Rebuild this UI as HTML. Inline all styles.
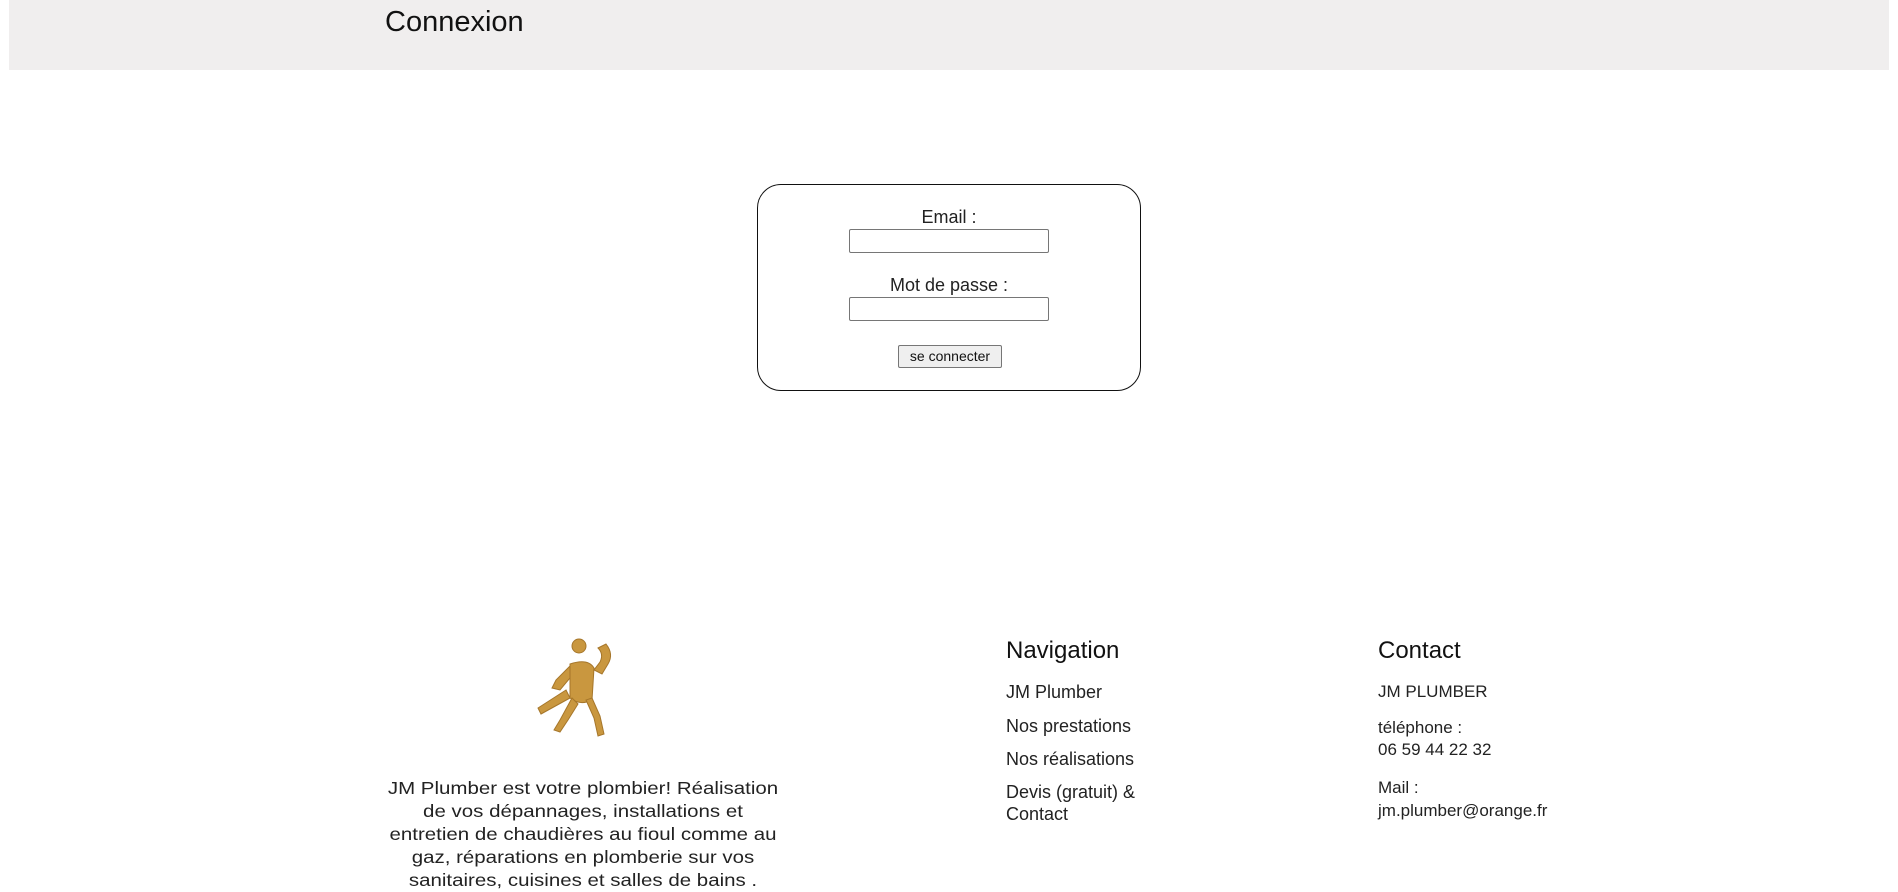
<!DOCTYPE html>
<html><head><meta charset="utf-8"><style>
body{margin:0;width:1898px;height:886px;overflow:hidden;background:#fff;font-family:"Liberation Sans",sans-serif;color:#222;position:relative}
.hdr{position:absolute;left:9px;top:0;width:1880px;height:70px;background:#f0eeee}
.hdr h1{position:absolute;left:376px;top:6px;margin:0;font-weight:normal;font-size:29px;color:#111}
.box{position:absolute;left:757px;top:184px;width:382px;height:205px;border:1.5px solid #111;border-radius:24px}
.lbl{position:absolute;width:100%;text-align:center;font-size:18px;color:#222}
.inp{position:absolute;left:91px;width:198px;height:22px;border:1px solid #767676;border-radius:2px;background:#fff}
.btn{position:absolute;left:140px;top:160px;width:102px;height:21px;border:1px solid #767676;border-radius:2px;background:#efefef;font-size:14px;text-align:center;line-height:21px;color:#111}
.t{position:absolute;font-size:18px;color:#222;white-space:nowrap}
.h{position:absolute;font-size:24px;color:#111}
.p{position:absolute;left:333px;top:777px;width:500px;text-align:center;font-size:17.5px;line-height:23px;color:#222;white-space:nowrap;transform:scaleX(1.17);transform-origin:250px 0}
</style></head><body>
<div class="hdr"><h1>Connexion</h1></div>
<div class="box">
<div class="lbl" style="top:22px">Email :</div>
<div class="inp" style="top:44px"></div>
<div class="lbl" style="top:90px">Mot de passe :</div>
<div class="inp" style="top:112px"></div>
<div class="btn">se connecter</div>
</div>
<svg style="position:absolute;left:530px;top:634px" width="100" height="106" viewBox="0 0 100 106">
<g fill="#c9973f" stroke="#a6762a" stroke-width="1">
<circle cx="49" cy="12" r="7"/>
<path d="M36 56 L8 74 L11 80 L40 64 Z"/>
<path d="M40 30 Q58 24 64 34 L62 66 Q50 72 40 64 Z"/>
<path d="M68 14 L76 10 Q84 20 78 30 L72 40 L64 36 L70 28 Q74 20 68 14Z"/>
<path d="M42 64 L30 86 L24 96 L30 98 L38 86 L48 70Z"/>
<path d="M56 66 L64 84 L68 102 L74 100 L70 82 L62 64Z"/>
<path d="M40 32 L26 46 L22 54 L30 56 L40 44Z"/>
</g></svg>
<div class="p">JM Plumber est votre plombier! Réalisation<br>de vos dépannages, installations et<br>entretien de chaudières au fioul comme au<br>gaz, réparations en plomberie sur vos<br>sanitaires, cuisines et salles de bains .</div>
<div class="h" style="left:1006px;top:637px">Navigation</div>
<div class="t" style="left:1006px;top:682px">JM Plumber</div>
<div class="t" style="left:1006px;top:716px">Nos prestations</div>
<div class="t" style="left:1006px;top:749px">Nos réalisations</div>
<div class="t" style="left:1006px;top:782px">Devis (gratuit) &amp;</div>
<div class="t" style="left:1006px;top:804px">Contact</div>
<div class="h" style="left:1378px;top:637px">Contact</div>
<div class="t" style="left:1378px;top:682px;font-size:17px">JM PLUMBER</div>
<div class="t" style="left:1378px;top:718px;font-size:17px">téléphone :</div>
<div class="t" style="left:1378px;top:740px;font-size:17px">06 59 44 22 32</div>
<div class="t" style="left:1378px;top:778px;font-size:17px">Mail :</div>
<div class="t" style="left:1378px;top:801px;font-size:17px">jm.plumber@orange.fr</div>
</body></html>
